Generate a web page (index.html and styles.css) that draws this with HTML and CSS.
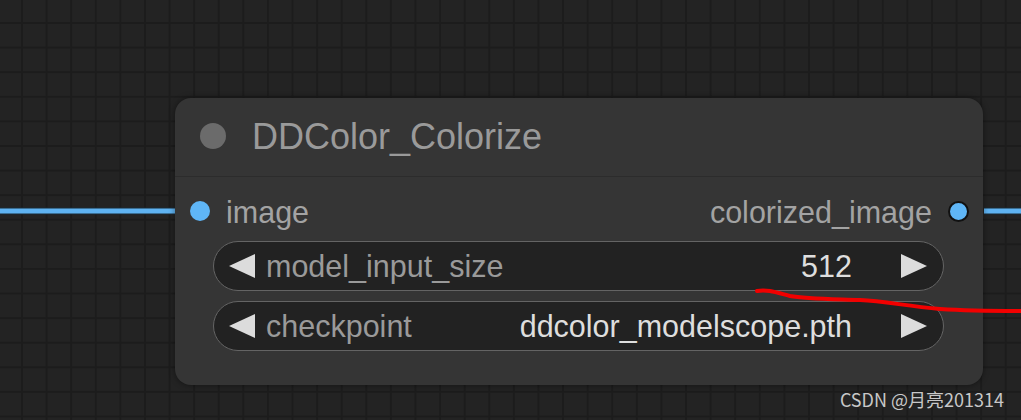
FILE: index.html
```html
<!DOCTYPE html>
<html>
<head>
  <title>DDColor_Colorize</title>
  <link rel="stylesheet" href="styles.css">
</head>
<body>

  <!-- Graph canvas -->
  <div id="canvas">

    <!-- Links between nodes -->
    <svg class="links" width="1021" height="420" viewBox="0 0 1021 420">
      <line class="link-outline" x1="0" y1="211" x2="176" y2="211"></line>
      <line class="link" x1="0" y1="211" x2="176" y2="211"></line>
      <line class="link-outline" x1="984" y1="211" x2="1021" y2="211"></line>
      <line class="link" x1="984" y1="211" x2="1021" y2="211"></line>
    </svg>

    <!-- Node -->
    <div class="node">
      <div class="node-title">
        <span class="title-dot"></span>
        <span class="title-text">DDColor_Colorize</span>
      </div>

      <div class="node-body">
        <div class="slots">
          <div class="slot slot-in">
            <span class="slot-dot"></span>
            <span>image</span>
          </div>
          <div class="slot slot-out">
            <span>colorized_image</span>
            <span class="slot-dot out"></span>
          </div>
        </div>

        <div class="widget">
          <span class="arrow left"></span>
          <span class="widget-label">model_input_size</span>
          <span class="widget-value">512</span>
          <span class="arrow right"></span>
        </div>

        <div class="widget">
          <span class="arrow left"></span>
          <span class="widget-label">checkpoint</span>
          <span class="widget-value">ddcolor_modelscope.pth</span>
          <span class="arrow right"></span>
        </div>
      </div>
    </div>

    <!-- hand drawn mark on the screenshot -->
    <svg class="scribble" width="1021" height="420" viewBox="0 0 1021 420">
      <path d="M757 291 C768 289 778 293 790 296 C805 299 830 299 860 300 C885 301 905 306 940 309 C970 311 1000 311 1021 311"></path>
    </svg>

    <div class="watermark">CSDN @月亮201314</div>
  </div>

</body>
</html>
```

FILE: styles.css
```css
body {
  margin: 0;
  background: #222;
  font-family: "Liberation Sans", Arial, sans-serif;
  overflow: hidden;
}

#canvas {
  position: relative;
  width: 1021px;
  height: 420px;
  background-color: #232323;
  background-image:
    linear-gradient(to right, #1c1c1c 2px, transparent 2px),
    linear-gradient(to bottom, #1c1c1c 2px, transparent 2px);
  background-size: 24.6px 24.6px;
  background-position: 21px 22px;
}

.links,
.scribble {
  position: absolute;
  top: 0;
  left: 0;
}

.link-outline {
  stroke: #1a2a36;
  stroke-width: 7;
}

.link {
  stroke: #5fb3f2;
  stroke-width: 5;
}

.scribble path {
  fill: none;
  stroke: #f20000;
  stroke-width: 4;
  stroke-linecap: round;
}

.node {
  position: absolute;
  left: 175px;
  top: 98px;
  width: 808px;
  height: 287px;
  background: #353535;
  border-radius: 16px;
  box-shadow: 0 0 6px rgba(0, 0, 0, 0.45);
}

.node-title {
  height: 78px;
  display: flex;
  align-items: center;
  border-bottom: 1px solid #2c2c2c;
  padding-left: 25px;
}

.title-dot {
  width: 26px;
  height: 26px;
  border-radius: 50%;
  background: #6b6b6b;
  margin-right: 26px;
  margin-top: -2px;
}

.title-text {
  color: #9a9a9a;
  font-size: 36px;
  margin-top: -1px;
}

.node-body {
  padding-top: 4px;
}

.slots {
  height: 60px;
  display: flex;
  justify-content: space-between;
  align-items: center;
  color: #a3a3a3;
  font-size: 30.5px;
  padding: 0 14px 0 15px;
}

.slot {
  display: flex;
  align-items: center;
  gap: 16px;
}

.slot span:not(.slot-dot) {
  margin-top: 3px;
}

.slot-dot {
  width: 20px;
  height: 20px;
  border-radius: 50%;
  background: #5fb6f7;
}

.slot-dot.out {
  width: 17px;
  height: 17px;
  border: 2px solid #111;
}

.widget {
  height: 48px;
  margin: 0 39px 10px 38px;
  border: 1.5px solid #646464;
  border-radius: 26px;
  background: #222;
  display: flex;
  align-items: center;
  padding: 0 16px 0 15px;
  font-size: 30.5px;
}

.arrow {
  width: 0;
  height: 0;
  border-top: 12.5px solid transparent;
  border-bottom: 12.5px solid transparent;
}

.arrow.left {
  border-right: 26px solid #dcdcdc;
}

.arrow.right {
  border-left: 26px solid #dcdcdc;
}

.widget-label {
  color: #9a9a9a;
  margin-left: 11px;
  flex: 1;
}

.widget-value {
  color: #dedede;
  margin-right: 49px;
}

.watermark {
  position: absolute;
  right: 17px;
  bottom: 8px;
  color: #c8c8c8;
  font-family: "Noto Sans CJK SC", "Noto Sans", sans-serif;
  font-size: 18px;
}
```
